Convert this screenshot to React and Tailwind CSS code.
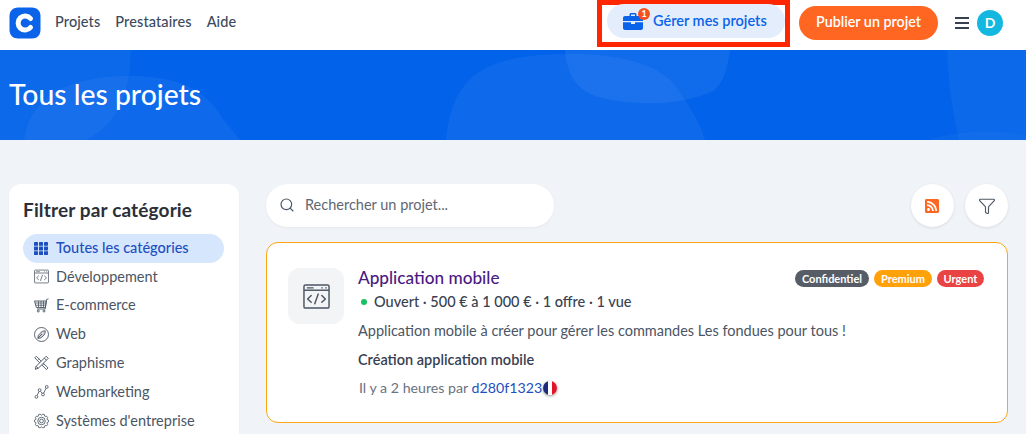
import React from "react";
import { Funnel, Search } from "lucide-react";
import { FaRssSquare } from "react-icons/fa";

const G = "#4b5563";
const DevIcon = ({ size = 16, color = G, sw = 1.75 }) => (
  <svg width={size} height={size} viewBox="0 0 28 28" fill="none" stroke={color} strokeWidth={sw}>
    <rect x="1" y="2" width="26" height="24" rx="1.5" />
    <path d="M1 7.5h26" />
    <path d="M4 5h7M19 5h1.5M23 5h1.5" strokeWidth="1.2" />
    <path d="M8.500 13 4.800 16.500l3.700 3.500M19.500 13l3.700 3.500-3.700 3.500M15.800 11.500l-3.600 10" strokeLinecap="round" strokeLinejoin="round" />
  </svg>
);
const GridIcon = () => (
  <svg width="14" height="13" viewBox="0 0 14 13" fill="#1e4fc0">
    {[0, 4.6, 9.2].flatMap((y) =>
      [0, 5, 10].map((x) => <rect key={`${x}-${y}`} x={x} y={y} width="4" height="3.8" rx="0.4" />)
    )}
  </svg>
);
const CartIcon = () => (
  <svg width="15" height="15" viewBox="0 0 15 15" fill="none" stroke={G} strokeWidth="0.9">
    <path d="M14.500.800 12.600 1.500 11.200 11H3" />
    <path d="M.500 3h11.800l-1 6.500H2.300Z" />
    <path d="M1 5h11M1.600 7.200h10.100M4.500 3v6.500M7 3v6.500M9.500 3v6.500" strokeWidth="0.8" />
    <circle cx="4.300" cy="13" r="1" />
    <circle cx="10" cy="13" r="1" />
  </svg>
);
const WebIcon = () => (
  <svg width="15" height="15" viewBox="0 0 15 15" fill="none" stroke={G} strokeWidth="0.9">
    <circle cx="7.500" cy="7.500" r="7" />
    <path d="M11.200 3.800c.2 2.300-.7 4-2.200 5.300L6.800 11l-2.900.4.300-2.900 1.900-2.200c1.300-1.500 3-2.500 5.100-2.500Z" fill={G} fillOpacity="0.25" />
    <path d="M4 11 8 7" />
  </svg>
);
const GraphIcon = () => (
  <svg width="16" height="16" viewBox="0 0 16 16" fill="none" stroke={G} strokeWidth="1">
    <path d="M2.500.800.800 2.500 13.300 15l1.700-1.700Z" />
    <path d="m4.500 4.500 1-1M7 7l1-1M10 10l1-1" strokeWidth="0.8" />
    <path d="M13 .800 15.200 3 4.500 13.700l-3.200 1 1-3.200Z" fill="#fff" />
    <path d="M11 2.800 13.200 5M2.300 11.500l2.200 2.200" />
  </svg>
);
const MarketingIcon = () => (
  <svg width="16" height="16" viewBox="0 0 16 16" fill="none" stroke={G} strokeWidth="0.9">
    <circle cx="2.600" cy="13.200" r="1.500" />
    <circle cx="6" cy="6" r="1.500" />
    <circle cx="9.600" cy="10.600" r="1.500" />
    <circle cx="13.600" cy="2.600" r="1.500" />
    <path d="M3.300 11.800 5.300 7.400M7 7.300l1.600 2M10.300 9.200l2.600-5.200" />
  </svg>
);
const gear = (() => {
  const pts = [];
  const n = 10;
  for (let i = 0; i < n; i++) {
    const a = (i / n) * Math.PI * 2;
    const w = Math.PI / n;
    [[6.2, -w * 0.85], [7.5, -w * 0.4], [7.5, w * 0.4], [6.2, w * 0.85]].forEach(([r, d]) => {
      pts.push(`${(8 + r * Math.cos(a + d)).toFixed(2)},${(8 + r * Math.sin(a + d)).toFixed(2)}`);
    });
  }
  return pts.join(" ");
})();
const GearIcon = () => (
  <svg width="16" height="16" viewBox="0 0 16 16" fill="none" stroke={G} strokeWidth="0.9">
    <polygon points={gear} strokeLinejoin="round" />
    <circle cx="8" cy="8" r="4" />
    <circle cx="8" cy="8" r="2" />
  </svg>
);
const Briefcase = () => (
  <svg width="20" height="17" viewBox="0 0 20 17" fill="#0b63ea">
    <path d="M6.500 3V1.600C6.500.7 7.200 0 8.100 0h3.800c.9 0 1.600.7 1.600 1.600V3H18c1.100 0 2 .9 2 2v3H0V5c0-1.100.9-2 2-2h4.500ZM8 1.500V3h4V1.500H8Z" />
    <path d="M0 9.300h8V11h4V9.300h8V15c0 1.100-.9 2-2 2H2c-1.100 0-2-.9-2-2V9.300Z" />
  </svg>
);
const Flag = () => (
  <span className="relative inline-flex w-[14px] h-[14px] rounded-full overflow-hidden shadow-[0_1px_3px_rgba(0,0,0,0.45)]">
    <span className="flex-1 bg-[#1d2b7f]" />
    <span className="flex-1 bg-white" />
    <span className="flex-1 bg-[#e0142a]" />
  </span>
);

const cats = [
  ["Développement", <DevIcon key="d" size={15} sw={1.4} />],
  ["E-commerce", <CartIcon key="e" />],
  ["Web", <WebIcon key="w" />],
  ["Graphisme", <GraphIcon key="g" />],
  ["Webmarketing", <MarketingIcon key="m" />],
  ["Systèmes d'entreprise", <GearIcon key="s" />],
];

export default function App() {
  return (
    <div className="h-[434px] overflow-hidden bg-[#f0f4f8] font-['Lato','Liberation_Sans',sans-serif] text-[#374151]">
      <header className="h-[50px] bg-white flex items-center pl-[9px] pr-[23px]">
        <svg width="32" height="32" viewBox="0 0 32 32" className="mb-[4px]">
          <path d="M9 .5h14c5 0 8.500 3.500 8.500 8.500v14c0 5-3.500 8.500-8.500 8.500H9C4 31.500.5 28 .5 23V9C.5 4 4 .5 9 .5Z" fill="#0b63ea" />
          <path d="M21.500 11.500a7 7 0 1 0 0 9" fill="none" stroke="#fff" strokeWidth="5" strokeLinecap="round" />
        </svg>
        <nav className="ml-[14px] flex gap-[15px] text-[14.500px] tracking-[0.1px] font-medium text-[#3c4a5e] mb-[6px]">
          <span>Projets</span>
          <span>Prestataires</span>
          <span>Aide</span>
        </nav>
        <div className="ml-auto flex items-center">
          <div className="mr-[9px] mb-[3px] border-[5px] border-[#ff2600] h-[47px] w-[193px] flex items-start">
            <div className="h-[34px] w-[178px] ml-[5px] -mt-[1px] rounded-full bg-[#e3edfc] flex items-center pl-[16px] text-[#0b63ea] text-[14.500px] font-semibold">
              <span className="relative flex mr-[10px]">
                <Briefcase />
                <span className="absolute -top-[5px] left-[15px] w-[12px] h-[12px] rounded-full bg-[#f4511e] text-white text-[9px] font-bold flex items-center justify-center leading-none">1</span>
              </span>
              Gérer mes projets
            </div>
          </div>
          <div className="h-[34px] w-[139px] mb-[5px] pb-[1px] rounded-full bg-[#ff6622] text-white text-[14.300px] font-semibold flex items-center justify-center">Publier un projet</div>
          <div className="ml-[17px] mb-[5px] flex flex-col gap-[3px] w-[14px]">
            <span className="h-[2px] bg-[#374151]" />
            <span className="h-[2px] bg-[#374151]" />
            <span className="h-[2px] bg-[#374151]" />
          </div>
          <div className="ml-[8px] mb-[5px] w-[26px] h-[26px] rounded-full bg-[#12b8e0] text-white text-[14px] font-bold flex items-center justify-center">D</div>
        </div>
      </header>

      <section className="relative h-[90px] bg-[#0263ea] overflow-hidden flex items-center px-[9px]">
        <svg className="absolute inset-0" width="1026" height="90" viewBox="0 0 1026 90" fill="#fff">
          <path opacity="0.05" d="M24 90C30 50 62 26 130 26c55 0 78 18 92 42l18 22Z" />
          <path opacity="0.04" d="M0 0h131c-2 40-8 70-45 90H0Z" />
          <path opacity="0.05" d="M446 90c4-35 12-48 25-62 25-22 70-24 100-24 50 0 85 10 103 30 12 18 25 35 31 56Z" />
          <path opacity="0.06" d="M565 0h165c-3 22-8 34-17 41-30 14-75 16-115 6-24-8-31-25-33-47Z" />
          <path opacity="0.04" d="M947 0h79v90h-67c-7-30-11-60-12-90Z" />
          <path opacity="0.03" d="M930 90c15-6 40-9 65-8 12 0 22 2 31 4v4Z" />
        </svg>
        <h1 className="relative text-white text-[28.300px] font-medium leading-none mb-[2px]">Tous les projets</h1>
      </section>

      <main className="flex items-start gap-[27px] pl-[9px] pr-[18px] pt-[44px]">
        <aside className="w-[230px] shrink-0 bg-white rounded-xl pl-[14px] pr-[15px] pt-[15px] pb-[20px] shadow-[0_1px_3px_rgba(0,0,0,0.03)]">
          <h2 className="text-[19px] tracking-[0.150px] font-bold text-[#2b3038] leading-[22px] mb-[13px]">Filtrer par catégorie</h2>
          <ul className="text-[14.500px] text-[#4b5563] leading-none">
            <li className="h-[29px] pb-[1px] rounded-full bg-[#d6e6fd] text-[#1e4fc0] font-medium flex items-center pl-[11px] gap-[8px]">
              <GridIcon />
              Toutes les catégories
            </li>
            {cats.map(([name, icon]) => (
              <li key={name} className="h-[28.800px] pb-[1px] flex items-center pl-[11px] gap-[7px]">
                <span className="w-[15px] flex justify-center">{icon}</span>
                {name}
              </li>
            ))}
          </ul>
        </aside>

        <div className="flex-1 min-w-0">
          <div className="flex items-center mb-[15px]">
            <div className="w-[288px] h-[43px] pb-[1px] rounded-full bg-white shadow-[0_1px_3px_rgba(0,0,0,0.05)] flex items-center pl-[13px] gap-[10px] text-[14.500px] text-[#5f6773]">
              <Search size={16} strokeWidth={1.75} color={G} />
              Rechercher un projet...
            </div>
            <div className="ml-auto flex gap-[11px]">
              <div className="w-[43px] h-[43px] pr-[1px] rounded-full bg-white shadow-[0_1px_3px_rgba(0,0,0,0.1)] flex items-center justify-center">
                <FaRssSquare size={16} color="#ff6622" />
              </div>
              <div className="w-[43px] h-[43px] rounded-full bg-white shadow-[0_1px_3px_rgba(0,0,0,0.1)] flex items-center justify-center">
                <Funnel size={18} strokeWidth={1.5} color={G} />
              </div>
            </div>
          </div>

          <article className="h-[181px] bg-white border border-[#ffa412] rounded-xl pl-[21px] pr-[23px] pt-[25px] flex gap-[14px]">
            <div className="w-[56px] h-[56px] rounded-xl bg-[#f3f4f6] flex items-center justify-center shrink-0">
              <DevIcon size={27} sw={1.500} />
            </div>
            <div className="flex-1 min-w-0">
              <div className="flex items-center justify-between h-[22px] -mt-[1px]">
                <h3 className="text-[17.200px] font-medium text-[#4a1a82]">Application mobile</h3>
                <div className="flex gap-[5px] text-[11px] font-bold text-white leading-none">
                  <span className="w-[74px] h-[17px] rounded-full bg-[#565d66] flex items-center justify-center">Confidentiel</span>
                  <span className="w-[58px] h-[17px] rounded-full bg-[#ffa10a] flex items-center justify-center">Premium</span>
                  <span className="w-[47px] h-[17px] rounded-full bg-[#e94343] flex items-center justify-center">Urgent</span>
                </div>
              </div>
              <div className="mt-[3px] h-[20px] flex items-center text-[14.500px] font-medium text-[#374151]">
                <span className="w-[6px] h-[6px] rounded-full bg-[#16c15f] ml-[3px] mr-[7px]" />
                Ouvert · 500 € à 1 000 € · 1 offre · 1 vue
              </div>
              <p className="mt-[9px] h-[20px] text-[14.500px] text-[#4b5563] leading-[20px]">Application mobile à créer pour gérer les commandes Les fondues pour tous !</p>
              <p className="mt-[9px] h-[20px] text-[14.500px] font-semibold text-[#374151] leading-[20px]">Création application mobile</p>
              <p className="mt-[8px] h-[20px] pl-[1px] text-[14.200px] text-[#6b7280] leading-[20px] flex items-center gap-[1px]">
                <span>Il y a 2 heures par <span className="text-[#1e4fc0]">d280f1323</span></span>
                <Flag />
              </p>
            </div>
          </article>
        </div>
      </main>
    </div>
  );
}
